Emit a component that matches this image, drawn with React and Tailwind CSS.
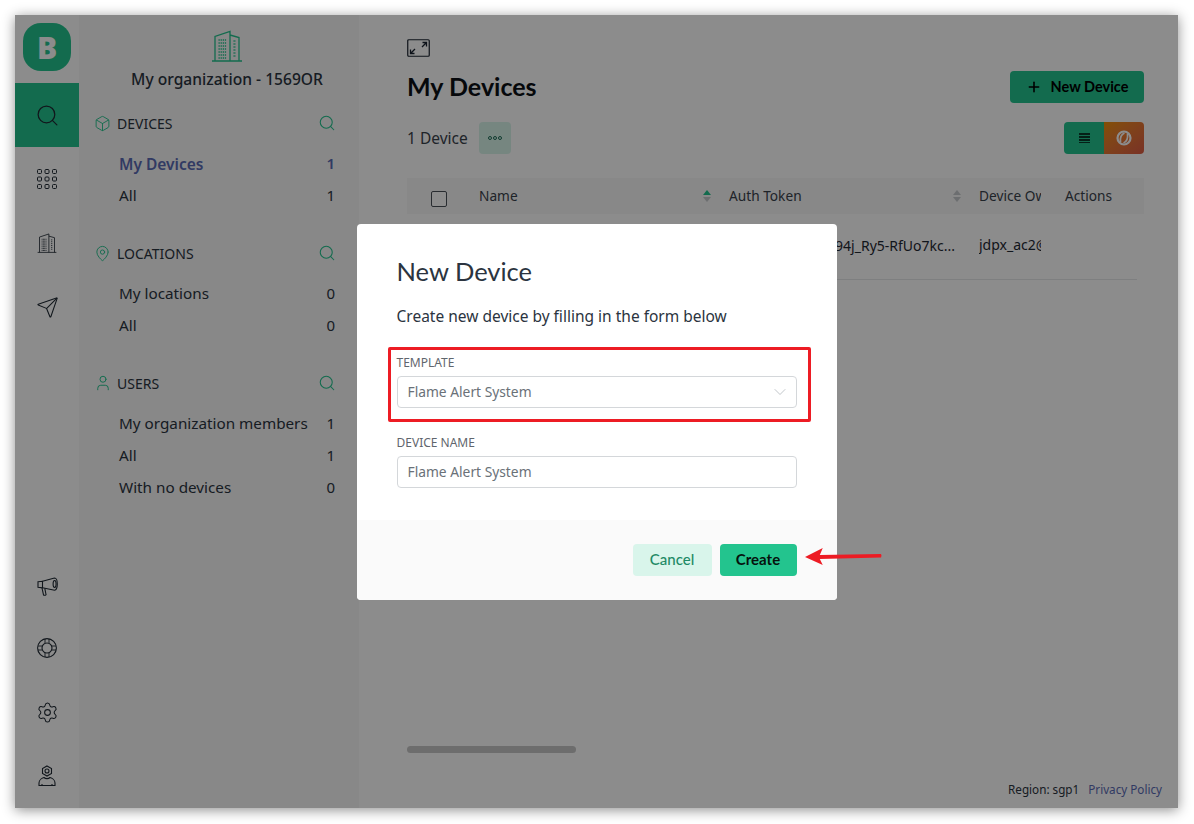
import { Search, Box, MapPin, User, Send, Settings, Plus, ChevronDown } from "lucide-react";

const body = "font-['Noto_Sans',sans-serif]";
const title = "font-['Lato',sans-serif]";

function Building({ className }) {
  return (
    <svg viewBox="0 0 32 32" fill="none" stroke="currentColor" strokeWidth="1.3" className={className}>
      <path d="M1 31h30M4 31V6.500L19 1.500v29.500M19 5l9 2.500V31" />
      <path d="M7.500 10h8M7.500 13h8M7.500 16h8M7.500 19h8M7.500 22h8M7.500 25h8M7.500 28h8" strokeWidth="1.5" strokeDasharray="1.300 0.800" />
      <path d="M22.500 11h2.500M22.500 14h2.500M22.500 17h2.500M22.500 20h2.500M22.500 23h2.500M22.500 26h2.500" strokeWidth="1.5" strokeDasharray="1.300 0.800" />
    </svg>
  );
}

function Apps() {
  return (
    <svg viewBox="0 0 20 20" fill="none" stroke="currentColor" strokeWidth="1" className="w-5 h-5">
      {[2.5, 10, 17.5].map((y) =>
        [2.5, 10, 17.5].map((x) => <rect key={`${x}-${y}`} x={x - 2} y={y - 2} width="4" height="4" rx="1" />)
      )}
    </svg>
  );
}

function Expand() {
  return (
    <svg viewBox="0 0 23 18" fill="none" className="w-[23px] h-[18px]" stroke="#1b2430">
      <rect x="0.75" y="0.75" width="21.5" height="16.5" rx="1" strokeWidth="1.2" />
      <path d="M15 8l4-4M15.500 3.500H19.500V7.500M8 10l-4 4M3.500 10.500V14.500H7.500" strokeWidth="1.3" />
    </svg>
  );
}

function Horn() {
  return (
    <svg viewBox="0 0 21 19" fill="none" stroke="currentColor" strokeWidth="1.1" className="w-[21px] h-[19px] mt-1">
      <path d="M1 4.800l4.500-.500v6.500L1 10.300z" />
      <path d="M5.500 4.300L17.500 1c1.800 0 2.800 2.500 2.800 6s-1 6-2.800 6.300L5.500 10.800" />
      <ellipse cx="17.600" cy="7" rx="1.500" ry="3.500" />
      <path d="M5 11l1.500 6.800c.200.800 2.700.500 2.500-.300L7.800 11.300" />
    </svg>
  );
}

function Buoy() {
  return (
    <svg viewBox="0 0 20 20" fill="none" stroke="currentColor" strokeWidth="1.100" className="w-5 h-5">
      <circle cx="10" cy="10" r="9.400" />
      <circle cx="10" cy="10" r="5" />
      <path d="M8 .800v4.500M12 .800v4.500M8 14.700v4.500M12 14.700v4.500M.800 8h4.500M.800 12h4.500M14.700 8h4.500M14.700 12h4.500" strokeWidth="0.900" />
    </svg>
  );
}

function Agent() {
  return (
    <svg viewBox="0 0 20 22" fill="none" stroke="currentColor" strokeWidth="1.1" className="w-5 h-[22px]">
      <path d="M10 1l4.500 2.500v5L10 11 5.500 8.500v-5z" />
      <circle cx="10" cy="6" r="2" />
      <path d="M2 20.500v-2.500c0-3 3-5 5-5.500 1.500 1.500 4.500 1.500 6 0 2 .500 5 2.500 5 5.500v2.500z" />
      <path d="M5 20.500v-1.500M15 20.500v-1.500" />
    </svg>
  );
}

function RailItem({ children, active }) {
  return (
    <div className={`h-16 flex items-center justify-center text-[#1f2933] ${active ? "bg-[#23c48e]" : ""}`}>
      {children}
    </div>
  );
}

function SideSection({ icon, label, items }) {
  return (
    <div className="mb-6">
      <div className="h-8 flex items-center">
        <span className="w-[22px] -ml-px mr-px text-[#23c48e]">{icon}</span>
        <span className="text-[14px] text-[#2b3440]">{label}</span>
        <Search className="w-[18px] h-[18px] ml-auto -mr-[1px] text-[#23c48e]" strokeWidth={1.4} />
      </div>
      <div className="mt-[10px] pl-6">
        {items.map((it) => (
          <div key={it.name} className={`h-8 flex items-center justify-between ${it.active ? "text-[15.5px] text-[#5a6bb5] font-semibold" : "text-[15.25px] text-[#2b3440]"}`}>
            <span className={it.active ? "" : "pb-[3px]"}>{it.name}</span>
            <span className="text-[15px] pb-[3px]">{it.count}</span>
          </div>
        ))}
      </div>
    </div>
  );
}

function SortArrows({ on }) {
  return (
    <div className="flex flex-col gap-[2px]">
      <span className={`w-0 h-0 border-x-4 border-x-transparent border-b-[5px] ${on ? "border-b-[#23c48e]" : "border-b-[#c5c9cc]"}`} />
      <span className="w-0 h-0 border-x-4 border-x-transparent border-t-[5px] border-t-[#c5c9cc]" />
    </div>
  );
}

function Field({ label, children }) {
  return (
    <div>
      <div className="text-[12px] leading-[16px] text-[#5f666d] mb-[5px]">{label}</div>
      {children}
    </div>
  );
}

export default function App() {
  return (
    <div className={`h-screen w-full bg-white pt-[15px] pl-[15px] pr-4 pb-4 overflow-hidden ${body}`}>
      <div className="relative h-full flex bg-white shadow-[0_2px_12px_rgba(0,0,0,0.45)]">
        {/* Rail */}
        <div className="w-16 shrink-0 flex flex-col bg-white">
          <div className="h-[68px] pt-2 flex justify-center">
            <div className={`w-12 h-12 bg-[#23c48e] rounded-[18px] flex items-center justify-center text-white text-[30px] font-black ${body}`}>B</div>
          </div>
          <RailItem active><Search className="w-[25px] h-[25px]" strokeWidth={1.2} /></RailItem>
          <RailItem><Apps /></RailItem>
          <RailItem><Building className="w-5 h-5" /></RailItem>
          <RailItem><Send className="w-[23px] h-[23px]" strokeWidth={1.1} /></RailItem>
          <div className="mt-auto">
            <RailItem><Horn /></RailItem>
            <RailItem><Buoy /></RailItem>
            <RailItem><Settings className="w-[23px] h-[23px]" strokeWidth={1.1} /></RailItem>
            <RailItem><Agent /></RailItem>
          </div>
        </div>

        {/* Sidebar */}
        <div className="w-[280px] shrink-0 bg-[#f7f7f7] pl-4 pr-6 pt-[15px]">
          <div className="flex flex-col items-center pl-6">
            <Building className="w-8 h-8 text-[#23c48e]" />
            <div className="mt-[6px] text-[15.6px] leading-[22px] font-medium text-[#2b3440] whitespace-nowrap">My organization - 1569OR</div>
          </div>
          <div className="mt-[17px]">
            <SideSection icon={<Box className="w-[17px] h-[17px]" strokeWidth={1.3} />} label="DEVICES" items={[{ name: "My Devices", count: 1, active: true }, { name: "All", count: 1 }]} />
            <SideSection icon={<MapPin className="w-[17px] h-[17px]" strokeWidth={1.3} />} label="LOCATIONS" items={[{ name: "My locations", count: 0 }, { name: "All", count: 0 }]} />
            <SideSection icon={<User className="w-[18px] h-[18px]" strokeWidth={1.3} />} label="USERS" items={[{ name: "My organization members", count: 1 }, { name: "All", count: 1 }, { name: "With no devices", count: 0 }]} />
          </div>
        </div>

        {/* Main */}
        <div className="flex-1 min-w-0 flex flex-col pl-12 pr-[34px] pt-6">
          <Expand />
          <div className="mt-[14px] flex items-center justify-between h-8">
            <h1 className={`text-[25px] font-bold text-[#0b0f14] ${title}`}>My Devices</h1>
            <button className={`w-[134px] h-8 pb-px rounded bg-[#23c48e] flex items-center justify-center gap-[9px] text-[14.5px] font-bold text-black ${title}`}>
              <Plus className="w-4 h-4" strokeWidth={2.4} />
              New Device
            </button>
          </div>
          <div className="mt-[19px] flex items-center h-8">
            <span className="text-[15.5px] pt-[2px] text-[#3a424c]">1 Device</span>
            <button className="ml-[11px] w-8 h-8 rounded bg-[#d8f4ea] flex items-center justify-center gap-[1px]">
              <span className="w-[4px] h-[4px] rounded-full border border-[#1f6f58]" />
              <span className="w-[4px] h-[4px] rounded-full border border-[#1f6f58]" />
              <span className="w-[4px] h-[4px] rounded-full border border-[#1f6f58]" />
            </button>
            <div className="ml-auto flex rounded overflow-hidden">
              <div className="w-10 h-8 bg-[#23c48e] flex flex-col items-center justify-center gap-[1px]">
                <span className="w-[11px] h-[2px] bg-[#0a3a2a]" />
                <span className="w-[11px] h-[2px] bg-[#0a3a2a]" />
                <span className="w-[11px] h-[2px] bg-[#0a3a2a]" />
                <span className="w-[11px] h-[1px] bg-[#0a3a2a]" />
              </div>
              <div className="w-10 h-8 bg-gradient-to-br from-[#f09000] to-[#dc5b44] flex items-center justify-center">
                <svg viewBox="0 0 16 16" className="w-4 h-4" fill="none" stroke="#ffffff" strokeWidth="2.200">
                  <circle cx="8" cy="8" r="6.500" />
                  <path d="M4.500 12C4 8 5 4.500 8.500 3M11.500 4C12 8 11 11.500 7.500 13" strokeWidth="1.700" />
                </svg>
              </div>
            </div>
          </div>

          {/* Table */}
          <div className="mt-6 h-9 flex items-center bg-[#f7f7f7] text-[13.7px] text-[#3a424c]">
            <span className="ml-6 w-4 h-4 mt-[6px] border border-[#4a5058] rounded-[2px] bg-white" />
            <span className="ml-8 w-[224px]">Name</span>
            <SortArrows on />
            <span className="ml-[18px] w-[224px]">Auth Token</span>
            <SortArrows />
            <span className="ml-[18px] w-[62px] overflow-hidden whitespace-nowrap">Device Owner</span>
            <span className="ml-6">Actions</span>
          </div>
          <div className="h-[66px] mr-[7px] border-b border-[#e6e8ea] flex text-[14px] text-[#1f2933]">
            <div className="ml-[322px] w-[226px] pt-[21px] text-right whitespace-nowrap">94j_Ry5-RfUo7kc...</div>
            <div className="ml-6 w-[62px] pt-5 overflow-hidden whitespace-nowrap">jdpx_ac2@example</div>
          </div>

          <div className="mt-auto w-[169px] h-[7px] rounded-full bg-[#c6c6c6]" />
          <div className="mt-7 mb-[11px] -mr-[18px] flex justify-end gap-[9px] text-[11.7px] leading-[16px]">
            <span className="text-[#2b3440]">Region: sgp1</span>
            <span className="text-[#5a6bb5]">Privacy Policy</span>
          </div>
        </div>

        {/* Overlay */}
        <div className="absolute inset-0 bg-black/45 flex items-center justify-center">
          <div className="relative w-[480px] h-[376px] rounded-[4px] bg-white flex flex-col overflow-visible">
            <div className="flex-1 pt-[30px] px-10">
              <div className={`text-[25.5px] leading-[34px] text-[#2b3440] ${title}`}>New Device</div>
              <div className="mt-[18px] text-[15.5px] leading-[20px] text-[#2b3440]">Create new device by filling in the form below</div>
              <div className="mt-[29px]">
                <Field label="TEMPLATE">
                  <div className="h-8 rounded-[4px] border border-[#d4d7da] pl-[10px] pr-[6px] flex items-center justify-between text-[13.8px] text-[#6a7178]">
                    <span className="pt-[2px]">Flame Alert System</span>
                    <ChevronDown className="w-5 h-5 text-[#b5babf]" strokeWidth={1} />
                  </div>
                </Field>
              </div>
              <div className="mt-[27px]">
                <Field label="DEVICE NAME">
                  <div className="h-8 rounded-[4px] border border-[#d4d7da] px-[10px] flex items-center text-[13.8px] text-[#6a7178]">
                    <span className="pt-[2px]">Flame Alert System</span>
                  </div>
                </Field>
              </div>
            </div>
            <div className="h-20 rounded-b-[4px] bg-[#fafafa] px-10 flex items-center justify-end gap-2">
              <button className={`w-[79px] h-8 rounded bg-[#d9f5eb] text-[15px] font-medium text-[#1f8a66] ${title}`}>Cancel</button>
              <button className={`w-[77px] h-8 rounded bg-[#23c48e] text-[15px] font-bold text-[#06120d] ${title}`}>Create</button>
            </div>

            {/* Annotations */}
            <div className="absolute left-[31px] top-[123px] w-[423px] h-[75px] border-[3px] border-[#ed1c24] rounded-[2px]" />
            <svg viewBox="0 0 78 17" className="absolute left-[448px] top-[324px] w-[77px] h-[17px]">
              <path d="M0 9 L18 0 L15 7 L77 6 Q78 8 77 9.500 L15 11 L18 17 Z" fill="#ed1c24" />
            </svg>
          </div>
        </div>
      </div>
    </div>
  );
}
